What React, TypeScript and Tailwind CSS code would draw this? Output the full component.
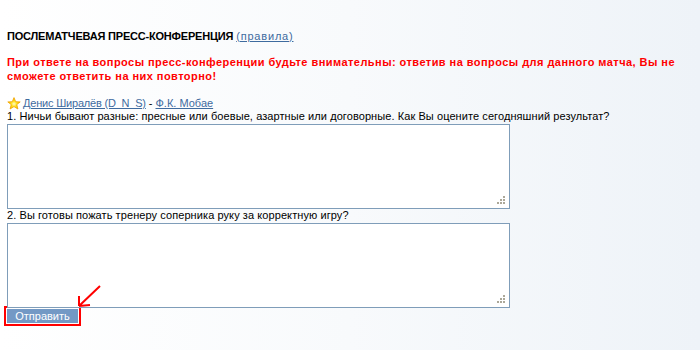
import React from "react";

const questions = [
  "1. Ничьи бывают разные: пресные или боевые, азартные или договорные. Как Вы оцените сегодняшний результат?",
  "2. Вы готовы пожать тренеру соперника руку за корректную игру?",
];

// точки-уголок для изменения размера поля
const Grip = () => (
  <svg className="absolute right-[4px] bottom-[4px]" width="9" height="9" viewBox="0 0 9 9">
    {[
      [6, 0],
      [3, 3],
      [6, 3],
      [0, 6],
      [3, 6],
      [6, 6],
    ].map(([x, y]) => (
      <rect key={`${x}-${y}`} x={x} y={y} width="2" height="2" fill="#aca899" />
    ))}
  </svg>
);

const Star = () => (
  <svg width="14" height="13" viewBox="0 0 14 13" className="mr-[2px] shrink-0">
    <defs>
      <radialGradient id="starGlow" cx="50%" cy="55%" r="50%">
        <stop offset="0%" stopColor="#fffbd0" />
        <stop offset="45%" stopColor="#ffe21a" />
        <stop offset="100%" stopColor="#f7b500" />
      </radialGradient>
    </defs>
    <path
      d="M7 0.6 L8.7 4.7 L13.2 4.9 L9.8 7.6 L10.9 12 L7 9.6 L3.1 12 L4.2 7.6 L0.8 4.9 L5.3 4.7 Z"
      fill="url(#starGlow)"
      stroke="#f0a500"
      strokeWidth="0.8"
      strokeLinejoin="round"
    />
  </svg>
);

const Answer = ({ label }: { label: string }) => (
  <div>
    <div className="leading-[13px] tracking-[0.08px] text-black">{label}</div>
    <div className="relative w-[503px] mt-[1px]">
      <textarea className="block w-full h-[85px] bg-white border border-[#7f9db9] resize-none outline-none" />
      <Grip />
    </div>
  </div>
);

export default function App() {
  return (
    <div
      className="relative w-[700px] h-[350px] overflow-hidden bg-gradient-to-r from-white via-[#f8fafc] to-[#eef3f8] pl-[7px] pt-[29px] text-[11px]"
      style={{ fontFamily: '"Liberation Sans", Arial, sans-serif' }}
    >
      <div className="leading-[14px]">
        <span className="font-bold tracking-[-0.2px] text-black">ПОСЛЕМАТЧЕВАЯ ПРЕСС-КОНФЕРЕНЦИЯ</span>{" "}
        <a className="text-[#3e6b9f] underline tracking-[0.8px]">(правила)</a>
      </div>

      <p className="mt-[12px] leading-[14px] font-bold tracking-[0.45px] text-[#ff0000] whitespace-nowrap">
        При ответе на вопросы пресс-конференции будьте внимательны: ответив на вопросы для данного матча, Вы не
        <br />
        сможете ответить на них повторно!
      </p>

      <div className="mt-[14px] flex items-center h-[13px] leading-[13px]">
        <Star />
        <a className="text-[#3e6b9f] underline tracking-[-0.2px]">Денис Ширалёв (D_N_S)</a>
        <span className="mx-[3px] text-black">-</span>
        <a className="text-[#3e6b9f] underline">Ф.К. Мобае</a>
      </div>

      <div className="flex flex-col">
        {questions.map((q) => (
          <Answer key={q} label={q} />
        ))}
      </div>

      <div className="ml-[-3px] mt-[-2px] w-[77px] border-2 border-[#ff0000] p-[1px]">
        <button className="block w-[71px] h-[14px] bg-[#7399c5] text-white text-[11px] leading-[14px]">
          Отправить
        </button>
      </div>

      {/* стрелка-указатель */}
      <svg className="absolute left-[76px] top-[283px]" width="28" height="26" viewBox="0 0 28 26">
        <path d="M24 3 L3 23 M3 23 L14 22 M3 23 L3 13" stroke="#ff0000" strokeWidth="2" fill="none" />
      </svg>
    </div>
  );
}
